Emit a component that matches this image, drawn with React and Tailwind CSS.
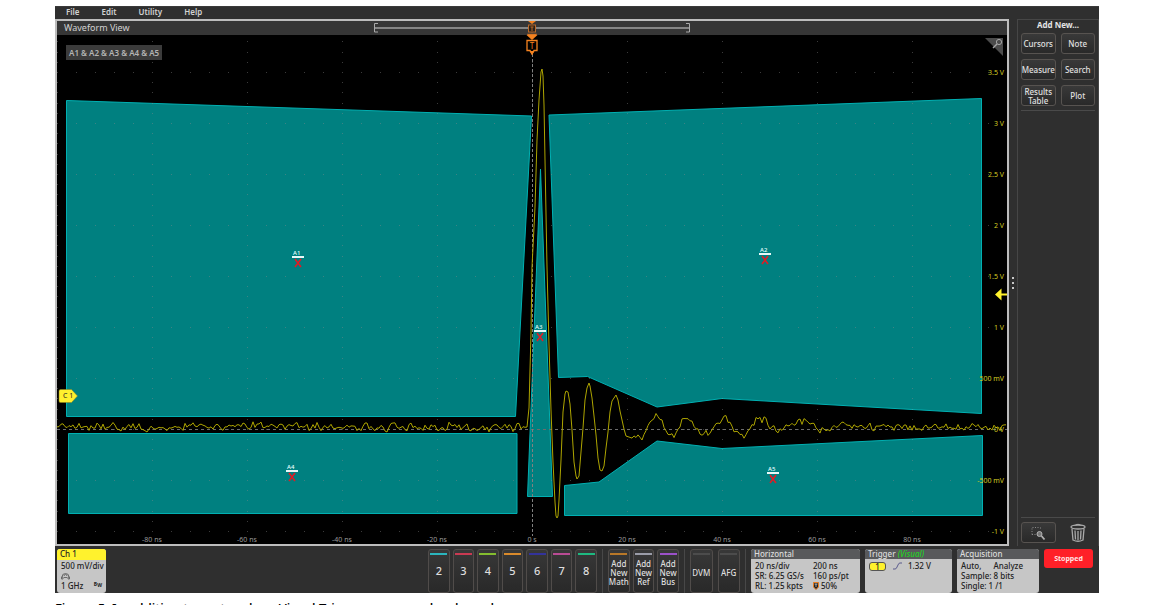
import React, { useState } from 'react';

const menuItems = ['File', 'Edit', 'Utility', 'Help'];

const addNewItems = ['Cursors', 'Note', 'Measure', 'Search', 'Results Table', 'Plot'];

const channels = [
  { label: '2', color: 'bg-[#2bb5bd]' },
  { label: '3', color: 'bg-[#c93a52]' },
  { label: '4', color: 'bg-[#84bd2f]' },
  { label: '5', color: 'bg-[#d98a2b]' },
  { label: '6', color: 'bg-[#33339c]' },
  { label: '7', color: 'bg-[#b94b94]' },
  { label: '8', color: 'bg-[#1eb980]' },
];

const mathItems = [
  { label: 'Add New Math', color: 'bg-[#b87828]' },
  { label: 'Add New Ref', color: 'bg-[#9a9ca8]' },
  { label: 'Add New Bus', color: 'bg-[#9b51c9]' },
];

const toolItems = [
  { label: 'DVM', color: 'bg-[#4c4c4c]' },
  { label: 'AFG', color: 'bg-[#4c4c4c]' },
];

const areas = [
  { id: 'A1', points: '66.5,100.5 531.5,116 515.5,416.5 66.5,416.5', x: 298, y: 257 },
  {
    id: 'A2',
    points: '549,115 981.5,98.5 981.5,413.5 722,398.5 657,407 587.5,376.5 558.5,377.5',
    x: 765,
    y: 254,
  },
  { id: 'A3', points: '540.5,169 552.5,496.5 527.5,496.5', x: 540, y: 331 },
  { id: 'A4', points: '68.5,433.5 517,433.5 517,513.5 68.5,513.5', x: 292, y: 471 },
  {
    id: 'A5',
    points: '564.5,485.5 599,482 657,441 722,448.5 982.5,435.5 982.5,515.5 564.5,515.5',
    x: 773,
    y: 473,
  },
];

const voltLabels = [
  { text: '3.5 V', y: 72 },
  { text: '3 V', y: 123 },
  { text: '2.5 V', y: 174 },
  { text: '2 V', y: 225 },
  { text: '1.5 V', y: 276 },
  { text: '1 V', y: 327 },
  { text: '500 mV', y: 378 },
  { text: '0 V', y: 429 },
  { text: '-500 mV', y: 480 },
  { text: '-1 V', y: 531 },
];

const timeLabels = [
  { text: '-80 ns', x: 152 },
  { text: '-60 ns', x: 247 },
  { text: '-40 ns', x: 342 },
  { text: '-20 ns', x: 437 },
  { text: '0 s', x: 532 },
  { text: '20 ns', x: 627 },
  { text: '40 ns', x: 722 },
  { text: '60 ns', x: 817 },
  { text: '80 ns', x: 912 },
];

// Pulse and the strong part of the ringing
const pulse = [
  [527, 427], [529, 408], [530, 370], [531, 333], [532, 267], [535, 207], [537, 140], [539, 100],
  [541, 72], [542, 69], [543, 76], [544, 105], [545, 160], [547, 267], [549, 345], [551, 410],
  [553, 462], [555, 502], [556, 516], [557, 518], [558, 516], [559, 500], [561, 460], [563, 412],
  [565, 394], [566, 391], [568, 392], [570, 404], [572, 430], [574, 462], [576, 476], [577, 479],
  [579, 476], [581, 452], [583, 428], [585, 400], [587, 388], [589, 383], [590, 386], [592, 398],
  [594, 416], [596, 435], [598, 458], [600, 470], [602, 471], [604, 466], [606, 448], [608, 432],
  [610, 412], [612, 401], [614, 398], [616, 395], [618, 400], [620, 411], [622, 420], [624, 429],
];

// Decaying part, joined with a cosine between the turning points
const ringing = [
  [624, 430], [630, 436], [641, 437], [656, 415], [672, 436], [687, 418], [705, 434],
  [724, 418], [742, 435], [760, 419], [777, 431], [804, 421], [822, 430], [843, 424], [862, 427],
  [1007, 427],
];

const noise = (i) => {
  const v = Math.sin(i * 12.9898) * 43758.5453;
  return v - Math.floor(v) - 0.5;
};

const ringLevel = (x) => {
  const i = ringing.findIndex((p) => p[0] > x);
  if (i < 1) return 427;
  const [x0, y0] = ringing[i - 1];
  const [x1, y1] = ringing[i];
  return y0 + ((y1 - y0) * (1 - Math.cos((Math.PI * (x - x0)) / (x1 - x0)))) / 2;
};

const buildTrace = () => {
  const points = [];
  for (let x = 57; x < 527; x += 2) points.push([x, 427 + noise(x) * 6 + noise(x >> 2) * 5]);
  points.push(...pulse);
  for (let x = 626; x <= 1007; x += 2) points.push([x, ringLevel(x) + noise(x) * 6 + noise(x >> 2) * 4]);
  return points.map(([x, y]) => `${x},${y.toFixed(1)}`).join(' ');
};

const trace = buildTrace();

const buildGrid = () => {
  const dots = [];
  for (let row = 0; row < 10; row++) {
    for (let x = 57; x < 1007; x += 19) dots.push([x, 72 + row * 51]);
  }
  for (let col = 0; col < 10; col++) {
    for (let i = -3; i < 46; i++) dots.push([57 + col * 95, Math.round(72 + i * 10.2)]);
  }
  return dots.map(([x, y]) => `M${x} ${y}h1v1h-1z`).join('');
};

const grid = buildGrid();

const Plot = () => (
  <svg
    viewBox="57 35 950 509"
    className="block w-full bg-black"
    role="img"
    aria-label="Waveform"
  >
    {areas.map((area) => (
      <polygon key={area.id} points={area.points} fill="#008080" stroke="#00b0b2" />
    ))}
    <path d={grid} fill="#8c8c8c" fillOpacity="0.42" />
    <path d="M57 429.5H1007" stroke="#6c6c6c" strokeDasharray="3 3" />
    <path d="M532.5 54V536" stroke="#808080" strokeDasharray="3 2" />
    <polyline points={trace} fill="none" stroke="#aea500" strokeWidth="1" strokeLinejoin="round" />

    {areas.map((area) => (
      <g key={area.id}>
        <text x={area.x - 5} y={area.y - 2} fontSize="6" fontWeight="500" fill="#e6ffff">
          {area.id}
        </text>
        <rect x={area.x - 6} y={area.y - 1} width="12" height="2" fill="#e8f8f8" />
        <path
          d={`M${area.x - 3} ${area.y + 2}l6 8m0 -8l-6 8`}
          stroke="#e01c24"
          strokeWidth="1.6"
        />
      </g>
    ))}

    <g fontSize="7" fill="#d2cb22" textAnchor="end">
      {voltLabels.map((label) => (
        <text key={label.text} x="1004" y={label.y + 3}>
          {label.text}
        </text>
      ))}
    </g>
    <g fontSize="7" fill="#999" textAnchor="middle">
      {timeLabels.map((label) => (
        <text key={label.text} x={label.x} y="542">
          {label.text}
        </text>
      ))}
    </g>

    {/* channel handle */}
    <path
      d="M60.5 389.5h11l6 6.5l-6 6.5h-11q-1.5 0 -1.5 -1.5v-10q0 -1.5 1.5 -1.5z"
      fill="#fff02e"
      stroke="#8a8320"
      strokeWidth="0.5"
    />
    <text x="63" y="398" fontSize="7" fill="#222">
      C 1
    </text>

    {/* trigger level */}
    <path d="M995 294.5l6.5 -6v5h5.5v2h-5.5v5z" fill="#fff22d" />

    {/* trigger position */}
    <path d="M526.5 35h11l-5.5 5z" fill="#f5821f" />
    <path
      d="M527 40.5h10v10h-3l-2 3.5l-2 -3.5h-3z"
      fill="#000"
      stroke="#f5821f"
      strokeWidth="1.3"
    />
    <path d="M529.5 51h5l-2.5 4z" fill="#f5821f" />
    <text x="532" y="49" fontSize="8" fill="#f5821f" textAnchor="middle">
      T
    </text>

    {/* zoom corner */}
    <path d="M985 38h18v18z" fill="#4b4b4b" />
    <circle cx="999" cy="42" r="2.6" fill="none" stroke="#a5a5a5" />
    <path d="M997 44l-4 4" stroke="#a5a5a5" strokeWidth="1.5" />
  </svg>
);

const RecordBar = () => (
  <svg
    viewBox="0 0 316 14"
    className="absolute left-1/2 top-0 h-[14px] w-[316px] -translate-x-1/2"
    aria-hidden="true"
  >
    <path d="M1 7H315" stroke="#858585" strokeWidth="2" />
    <path d="M4 2.5H.5V11H4M312 2.5H315.5V11H312" fill="none" stroke="#aaa" />
    <path d="M154 0h8l-4 3z" fill="#f5821f" />
    <rect x="154.5" y="4" width="7" height="7" fill="#2a2118" stroke="#b8682a" />
    <path d="M156.5 6h3M158 6v4" stroke="#b8682a" />
    <path d="M158 11v1M153 13h10l-1 1h-8z" stroke="#b8682a" strokeWidth="0.5" fill="#f5821f" />
  </svg>
);

const PanelButton = ({ children, label }) => (
  <button
    type="button"
    aria-label={label}
    className="flex h-[21px] items-center justify-center rounded-[3px] border border-[#575350] bg-linear-to-b from-[#393939] to-[#292929] text-[8px] font-medium leading-[9px] text-[#e0e0e0]"
  >
    {children}
  </button>
);

const SlotButton = ({ item, large }) => (
  <button
    type="button"
    className={`flex h-[44px] flex-col items-center rounded-[3px] border border-[#504c4a] bg-linear-to-b from-[#383838] to-[#292929] pt-[3px] font-medium text-[#dedede] ${
      large ? 'pb-[6px] text-[11px]' : 'pb-[3px] text-[8px]'
    }`}
  >
    <span className={`h-[2px] w-[17px] shrink-0 ${item.color}`} />
    <span className="flex w-[17px] flex-1 items-center justify-center leading-[9px]">{item.label}</span>
  </button>
);

const Divider = () => <div className="mx-[5px] h-[44px] w-px bg-[#484848]" />;

const InfoCard = ({ title, className, children }) => (
  <section className={`h-[44px] overflow-hidden rounded-[3px] bg-[#c6c6c6] text-[8px] font-medium text-[#222] ${className}`}>
    <h2 className="h-[10px] bg-[#58595b] px-[3px] leading-[10px] text-[#dcdcdc]">{title}</h2>
    <div className="px-[4px] pt-[2px] leading-[10px]">{children}</div>
  </section>
);

const Sidebar = () => (
  <aside className="flex w-[82px] flex-col border border-b-0 border-[#464646] px-[3px]">
    <h2 className="text-center text-[8px] font-bold leading-[9px] text-[#e4e4e4]">Add New...</h2>
    <div className="mt-[4px] grid grid-cols-2 gap-x-[5px] gap-y-[5px]">
      {addNewItems.map((item) => (
        <PanelButton key={item}>{item}</PanelButton>
      ))}
    </div>
    <div className="mt-[4px] h-px bg-[#4a4a4a]" />
    <div className="mt-auto h-px bg-[#4a4a4a]" />
    <div className="grid grid-cols-2 gap-x-[5px] pt-[4px] pb-[3px]">
      <PanelButton label="Zoom to area">
        <svg viewBox="0 0 16 16" className="h-[16px] w-[16px]" fill="none">
          <path d="M2 9.5V2.5H10" stroke="#8a8a8a" strokeDasharray="1 1.5" />
          <path d="M2 9.5H6M10.5 2.5V5" stroke="#8a8a8a" strokeDasharray="1 1.5" />
          <circle cx="9.5" cy="9" r="2.5" fill="#777" stroke="#b4b4b4" />
          <path d="M11.5 11l3 3.5" stroke="#b4b4b4" strokeWidth="1.8" />
        </svg>
      </PanelButton>
      <button type="button" aria-label="Trash" className="flex h-[21px] items-center justify-center">
        <svg viewBox="0 0 16 20" className="h-[20px] w-[16px]" fill="none" stroke="#a9a9a9">
          <ellipse cx="8" cy="4" rx="7" ry="2" strokeWidth="1.3" />
          <path d="M5.5 2q2.5 -1.5 5 0" />
          <path d="M2 6l1 11q5 2.5 10 0l1 -11" strokeWidth="1.3" />
          <path d="M5 7.5l.5 9M8 8v9M11 7.5l-.5 9" strokeWidth="1.3" />
        </svg>
      </button>
    </div>
  </aside>
);

const BottomBar = ({ running, onToggle }) => (
  <footer className="flex h-[47px] items-start pt-[3px] pr-[6px] pl-[2px]">
    <section className="h-[44px] w-[49px] overflow-hidden rounded-[3px] bg-[#c6c6c6] text-[8px] font-medium text-[#222]">
      <h2 className="h-[11px] bg-[#fff22d] px-[3px] leading-[10px]">Ch 1</h2>
      <div className="px-[4px] pt-px leading-[10px] whitespace-nowrap">
        <p>500 mV/div</p>
        <svg viewBox="0 0 9 10" className="block h-[10px] w-[9px]" fill="none" stroke="#555" strokeWidth="0.8">
          <path d="M1 6a3.5 3.5 0 0 1 7 0M3 5a1.5 1.5 0 0 1 3 0" />
          <path d="M.5 6h1.5v2H.5zM7 6h1.5v2H7zM3 6.5h3" />
        </svg>
        <p className="flex justify-between">
          1 GHz
          <span className="text-[5px] font-bold leading-[7px]">
            B<sub className="text-[5px]">W</sub>
          </span>
        </p>
      </div>
    </section>

    <div className="ml-auto grid w-[169px] grid-cols-7 gap-x-[3px]">
      {channels.map((item) => (
        <SlotButton key={item.label} item={item} large />
      ))}
    </div>
    <Divider />
    <div className="grid w-[71px] grid-cols-3 gap-x-[3px]">
      {mathItems.map((item) => (
        <SlotButton key={item.label} item={item} />
      ))}
    </div>
    <Divider />
    <div className="grid w-[50px] grid-cols-2 gap-x-[5px]">
      {toolItems.map((item) => (
        <SlotButton key={item.label} item={item} />
      ))}
    </div>
    <Divider />

    <div className="flex gap-[5px]">
      <InfoCard title="Horizontal" className="w-[109px]">
        <div className="grid grid-cols-[58px_1fr] whitespace-nowrap">
          <span>20 ns/div</span>
          <span>200 ns</span>
          <span>SR: 6.25 GS/s</span>
          <span>160 ps/pt</span>
          <span>RL: 1.25 kpts</span>
          <span className="flex items-center gap-[2px]">
            <svg viewBox="0 0 6 8" className="h-[8px] w-[6px]">
              <path d="M.5 .5h5v4.5l-2.5 2.5l-2.5 -2.5z" fill="#222" stroke="#e87d1e" />
              <path d="M1.5 2h3M3 2v3" stroke="#fff" strokeWidth="0.6" />
            </svg>
            50%
          </span>
        </div>
      </InfoCard>
      <InfoCard
        title={
          <>
            Trigger <em className="text-[#22d422]">(Visual)</em>
          </>
        }
        className="w-[87px]"
      >
        <div className="flex items-center gap-[6px]">
          <span className="w-[17px] rounded-[3px] border border-[#555] bg-[#fff22d] text-center leading-[7px]">1</span>
          <svg viewBox="0 0 10 8" className="h-[8px] w-[10px]" fill="none" stroke="#5a5a8c">
            <path d="M1 7h2q1 0 1.5 -1l2 -4q.5 -1 1.5 -1h2" />
          </svg>
          1.32 V
        </div>
      </InfoCard>
      <InfoCard title="Acquisition" className="w-[82px]">
        <p className="flex gap-[12px]">
          <span>Auto,</span>
          <span>Analyze</span>
        </p>
        <p>Sample: 8 bits</p>
        <p>Single: 1 /1</p>
      </InfoCard>
      <button
        type="button"
        onClick={onToggle}
        className="h-[19px] w-[49px] rounded-[3px] bg-[#ff2028] text-[7px] font-bold leading-[10px] text-[#ffe4e4]"
      >
        {running ? 'Running' : 'Stopped'}
      </button>
    </div>
  </footer>
);

const App = () => {
  const [running, setRunning] = useState(false);

  return (
    <div className="h-screen overflow-hidden bg-white pt-[6px] pr-[56px] pl-[55px] font-['Noto_Sans',sans-serif]">
      <main className="bg-[#2f2f2f]">
        <nav className="flex h-[13px] items-start gap-[22px] border-t border-[#3a3a3a] pl-[11px] text-[8px] font-semibold leading-[9px] text-[#d2d2d2]">
          {menuItems.map((item) => (
            <button type="button" key={item}>
              {item}
            </button>
          ))}
        </nav>

        <div className="flex">
          <section className="min-w-0 flex-1 border-2 border-[#bdbdbd]">
            <header className="relative h-[14px] bg-[#363636] px-[7px]">
              <h1 className="text-[9px] leading-[13px] text-[#d2d2d2]">Waveform View</h1>
              <RecordBar />
            </header>
            <div className="relative">
              <Plot />
              <div className="absolute top-[10px] left-[9px] bg-[#3b3b3b] px-[3px] text-[8px] font-semibold leading-[15px] text-[#b4b4b4]">
                A1 &amp; A2 &amp; A3 &amp; A4 &amp; A5
              </div>
            </div>
          </section>
          <div className="flex w-[8px] flex-col items-center justify-center gap-[3px]">
            <span className="h-[2px] w-[2px] bg-[#c8c8c8]" />
            <span className="h-[2px] w-[2px] bg-[#c8c8c8]" />
            <span className="h-[2px] w-[2px] bg-[#c8c8c8]" />
          </div>
          <Sidebar />
        </div>

        <BottomBar running={running} onToggle={() => setRunning(!running)} />
      </main>
      <p className="pt-[6px] text-[13px] font-medium leading-[18px] whitespace-nowrap text-black">
        Figure 5. In addition to custom box, Visual Trigger areas can be shaped
      </p>
    </div>
  );
};

export default App;
